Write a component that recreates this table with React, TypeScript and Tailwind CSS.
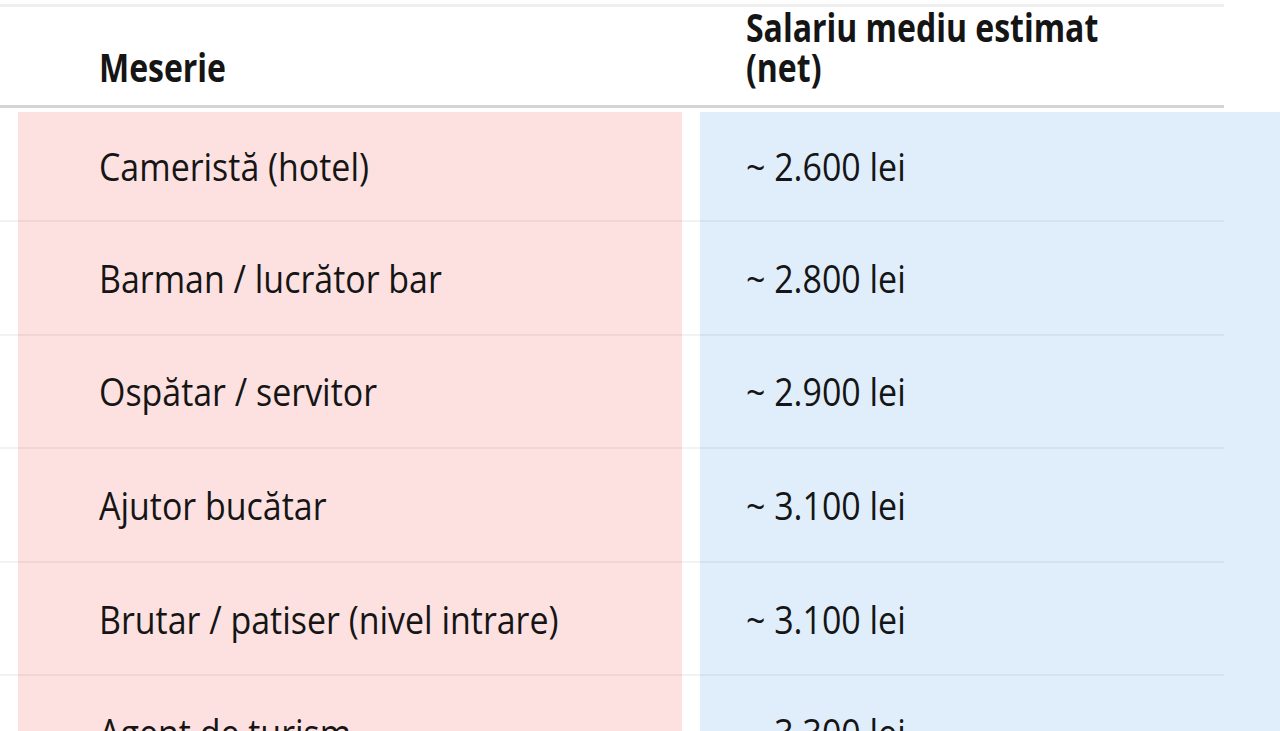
const ROWS: [string, string][] = [
  ["Cameristă (hotel)", "~ 2.600 lei"],
  ["Barman / lucrător bar", "~ 2.800 lei"],
  ["Ospătar / servitor", "~ 2.900 lei"],
  ["Ajutor bucătar", "~ 3.100 lei"],
  ["Brutar / patiser (nivel intrare)", "~ 3.100 lei"],
  ["Agent de turism", "~ 3.300 lei"],
];

/** text is squeezed a bit sideways, like the source screenshot */
function Txt({ children, bold }: { children: React.ReactNode; bold?: boolean }) {
  return bold ? (
    <span className="inline-block origin-left scale-x-[0.82] font-bold">{children}</span>
  ) : (
    <span className="inline-block origin-left scale-x-[0.87]">{children}</span>
  );
}

function Row({ job, pay, first }: { job: string; pay: string; first?: boolean }) {
  return (
    <div
      className={`grid grid-cols-[18px_664px_18px_524px_56px] ${first ? "h-[110px]" : "h-[113.6px]"}`}
    >
      <div className="border-b-2 border-black/[0.05]" />
      <div className="flex items-center border-b-2 border-black/[0.05] bg-[#fde1e1] pl-[81px]">
        <Txt>{job}</Txt>
      </div>
      <div className="border-b-2 border-black/[0.05]" />
      <div className="flex items-center border-b-2 border-black/[0.05] bg-[#e0eefc] pl-[46px]">
        <Txt>{pay}</Txt>
      </div>
      <div className="bg-[#e0eefc]" />
    </div>
  );
}

export default function App() {
  return (
    <div className="h-[731px] w-[1280px] overflow-hidden bg-white pt-[4px] font-['Open_Sans','Noto_Sans',sans-serif] text-[39px] leading-[40px] text-[#151515]">
      <div className="w-[1224px] border-t-[3px] border-[#efefef]">
        <div className="grid h-[101px] grid-cols-[18px_664px_18px_524px] items-end border-b-[3px] border-[#d5d5d5] pb-[18px]">
          <div />
          <div className="pl-[81px]">
            <Txt bold>Meserie</Txt>
          </div>
          <div />
          <div className="pl-[46px]">
            <Txt bold>
              Salariu mediu estimat
              <br />
              (net)
            </Txt>
          </div>
        </div>
      </div>
      <div className="mt-[4px]">
        {ROWS.map(([job, pay], i) => (
          <Row key={job} job={job} pay={pay} first={i === 0} />
        ))}
      </div>
    </div>
  );
}
